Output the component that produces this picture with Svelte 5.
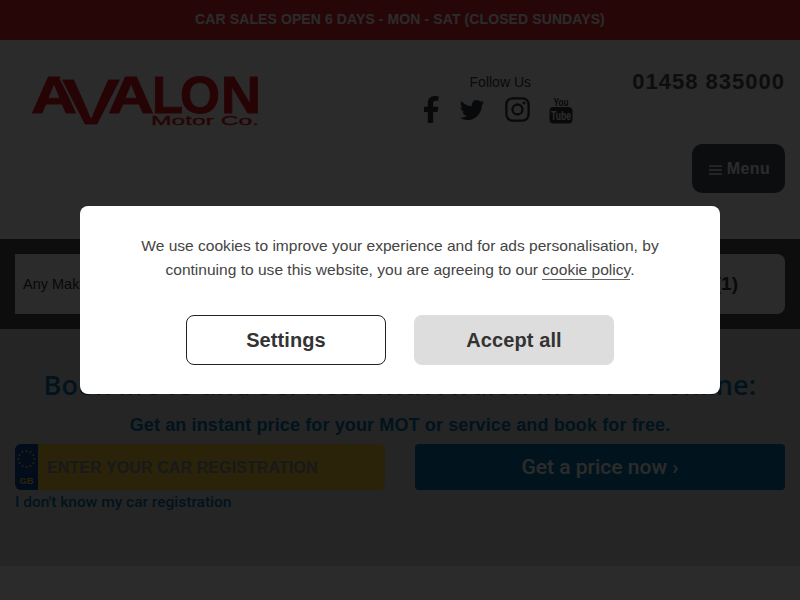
<script>
  // Cookie notice is open on load, page sits dimmed behind it
  let showCookies = true;

  const stars = Array.from({ length: 12 }, (_, i) => {
    const a = (i / 12) * Math.PI * 2;
    return { x: 11.5 + Math.cos(a) * 8, y: 16 + Math.sin(a) * 8 };
  });
</script>

<div class="page">
  <div class="topbar">CAR SALES OPEN 6 DAYS - MON - SAT (CLOSED SUNDAYS)</div>

  <header class="header">
    <a class="logo" href="#home" aria-label="Avalon Motor Co.">
      <svg width="232" height="56" viewBox="0 0 232 56">
        <g class="logo-letters">
          <text x="-1" y="39.5" font-size="51" textLength="46" lengthAdjust="spacingAndGlyphs">A</text>
          <text x="76" y="39.5" font-size="51" textLength="46" lengthAdjust="spacingAndGlyphs">A</text>
          <text class="logo-v" x="28" y="51.5" font-size="67" textLength="62" lengthAdjust="spacingAndGlyphs">V</text>
          <text x="120" y="39.5" font-size="51" textLength="31" lengthAdjust="spacingAndGlyphs">L</text>
          <text x="148" y="39.5" font-size="51" textLength="40" lengthAdjust="spacingAndGlyphs">O</text>
          <text x="189" y="39.5" font-size="51" textLength="40" lengthAdjust="spacingAndGlyphs">N</text>
          <text class="logo-sub" x="119" y="52" font-size="12" textLength="108" lengthAdjust="spacingAndGlyphs">Motor Co.</text>
        </g>
      </svg>
    </a>

    <div class="header-right">
      <div class="contact">
        <div class="social">
          <span class="follow">Follow Us</span>
          <div class="icons">
            <svg class="fb" width="15" height="27" viewBox="520 0 850 1536"><path d="M1343 12v264h-157q-86 0-116 36t-30 108v189h293l-39 296h-254v759h-306v-759h-255v-296h255v-218q0-186 104-288.5t277-102.5q147 0 228 12z"/></svg>
            <svg class="tw" width="28" height="28" viewBox="0 0 1792 1792"><path d="M1684 408q-67 98-162 167 1 14 1 42 0 130-38 259.5t-115.5 248.5-184.5 210.5-258 146-323 54.5q-271 0-496-145 35 4 78 4 225 0 401-138-105-2-188-64.5t-114-159.5q33 5 61 5 43 0 85-11-112-23-185.5-111.5t-73.5-205.5v-4q68 38 146 41-66-44-105-115t-39-154q0-88 44-163 121 149 294.5 238.5t371.5 99.5q-8-38-8-74 0-134 94.5-228.5t228.5-94.5q140 0 236 102 109-21 205-78-37 115-142 182 100-11 192-52z"/></svg>
            <svg class="ig" width="25" height="25" viewBox="0 0 25 25">
              <rect x="1.4" y="1.4" width="22.2" height="22.2" rx="6" fill="none" stroke-width="2.3"/>
              <circle cx="12.5" cy="12.5" r="5" fill="none" stroke-width="2.3"/>
              <circle class="dot" cx="19" cy="6" r="1.5"/>
            </svg>
            <svg class="yt" width="24" height="29" viewBox="0 0 24 29">
              <text class="yt-you" x="12" y="10.5" text-anchor="middle" font-size="11.5" textLength="15" lengthAdjust="spacingAndGlyphs">You</text>
              <rect x="0.5" y="12" width="23" height="16.5" rx="4"/>
              <text class="yt-tube" x="12" y="25" text-anchor="middle" font-size="13" textLength="20" lengthAdjust="spacingAndGlyphs">Tube</text>
            </svg>
          </div>
        </div>
        <a class="phone" href="tel:01458835000">01458 835000</a>
      </div>

      <button class="menu-btn">
        <svg width="13" height="10" viewBox="0 0 13 10"><path d="M0 1h13M0 5h13M0 9h13" stroke-width="1.6"/></svg>
        Menu
      </button>
    </div>
  </header>

  <section class="search">
    <div class="search-box">
      <span class="make">Any Make</span>
      <span class="search-count">Search (1)</span>
    </div>
  </section>

  <section class="booking">
    <h1>Book MOTs and Services with Avalon Motor Co online:</h1>
    <p class="lead">Get an instant price for your MOT or service and book for free.</p>
    <div class="reg-grid">
      <div>
        <div class="plate">
          <div class="gb">
            <svg width="23" height="30" viewBox="0 0 23 30">
              {#each stars as s}
                <circle cx={s.x} cy={s.y - 3} r="1" />
              {/each}
            </svg>
            <span>GB</span>
          </div>
          <span class="reg-input">ENTER YOUR CAR REGISTRATION</span>
        </div>
        <a class="no-reg" href="#reg">I don't know my car registration</a>
      </div>
      <button class="price-btn">Get a price now ›</button>
    </div>
  </section>

  <div class="footer"></div>
</div>

{#if showCookies}
  <div class="overlay">
    <div class="modal">
      <p>We use cookies to improve your experience and for ads personalisation, by continuing to use this website, you are agreeing to our <a href="#cookies">cookie policy</a>.</p>
      <div class="modal-actions">
        <button class="settings">Settings</button>
        <button class="accept" on:click={() => (showCookies = false)}>Accept all</button>
      </div>
    </div>
  </div>
{/if}

<style>
  :global(body) {
    margin: 0;
    font-family: "Liberation Sans", Arial, sans-serif;
    background: #fff;
  }

  .page {
    height: 600px;
    overflow: hidden;
    display: flex;
    flex-direction: column;
  }

  .topbar {
    height: 40px;
    line-height: 38px;
    text-align: center;
    background: #e0262e;
    color: #fff;
    font-size: 14px;
    font-weight: 700;
    letter-spacing: 0.1px;
  }

  .header {
    height: 199px;
    box-sizing: border-box;
    display: flex;
    justify-content: space-between;
    padding: 33px 15px 0 32px;
    background: #fff;
  }

  .logo {
    display: block;
    height: 56px;
  }

  .logo svg {
    overflow: visible;
  }

  .logo-letters text {
    font-family: "Liberation Sans", Arial, sans-serif;
    font-weight: 700;
    fill: #e21c24;
    stroke: #e21c24;
    stroke-width: 1px;
  }

  .logo-letters .logo-v {
    stroke: #fff;
    stroke-width: 1.2px;
  }

  .logo-letters .logo-sub {
    font-weight: 400;
    stroke-width: 0.3px;
  }

  .header-right {
    display: flex;
    flex-direction: column;
    align-items: flex-end;
  }

  .contact {
    display: flex;
    align-items: flex-start;
    height: 60px;
    margin-top: -4px;
  }

  .social {
    display: flex;
    flex-direction: column;
    align-items: center;
    margin: 4px 59px 0 0;
  }

  .follow {
    font-size: 14px;
    line-height: 18px;
    padding-left: 3px;
    color: #3a3d40;
  }

  .icons {
    display: flex;
    align-items: center;
    gap: 19px;
    margin-top: 3px;
    height: 31px;
  }

  .icons svg {
    fill: #34373b;
    stroke: #34373b;
    stroke-width: 0;
    display: block;
  }

  .icons .ig {
    stroke-width: 2.3px;
    fill: none;
  }

  .icons .ig .dot {
    fill: #34373b;
    stroke: none;
  }

  .yt text {
    font-family: "Liberation Sans", Arial, sans-serif;
    font-weight: 700;
  }

  .yt .yt-tube {
    fill: #fff;
  }

  .phone {
    font-size: 22px;
    font-weight: 700;
    letter-spacing: 1px;
    line-height: 26px;
    color: #4a4e54;
    text-decoration: none;
  }

  .menu-btn {
    margin-top: 15px;
    width: 93px;
    height: 49px;
    border: 0;
    border-radius: 10px;
    background: #4a4e54;
    color: #fff;
    font-family: inherit;
    font-size: 16px;
    font-weight: 700;
    letter-spacing: 0.4px;
    display: flex;
    align-items: center;
    justify-content: center;
    gap: 5px;
    padding: 0 0 0 2px;
  }

  .menu-btn svg {
    stroke: #fff;
    margin-top: 3px;
  }

  .search {
    height: 90px;
    box-sizing: border-box;
    padding: 15px;
    background: #4d5055;
  }

  .search-box {
    height: 60px;
    background: #fff;
    border-radius: 0 8px 8px 0;
    display: flex;
    align-items: center;
    justify-content: space-between;
    padding: 0 47px 0 8px;
    font-size: 14.5px;
    color: #333;
  }

  .search-count {
    font-size: 19px;
    font-weight: 700;
    color: #2a3a4a;
  }

  .booking {
    height: 237px;
    box-sizing: border-box;
    padding: 38px 15px 0;
    background: #dadbdd;
  }

  h1 {
    margin: 0;
    text-align: center;
    font-family: "Open Sans", sans-serif;
    font-weight: 600;
    font-size: 27px;
    line-height: 36px;
    color: #0a71ac;
    letter-spacing: 0.22px;
  }

  .lead {
    margin: 11px 0 8px;
    text-align: center;
    font-size: 18px;
    line-height: 22px;
    font-weight: 700;
    letter-spacing: 0.12px;
    color: #0a71ac;
  }

  .reg-grid {
    display: grid;
    grid-template-columns: 1fr 1fr;
    gap: 30px;
    align-items: start;
  }

  .plate {
    height: 46px;
    display: flex;
    align-items: center;
    background: #f6c93a;
    border-radius: 6px;
    overflow: hidden;
  }

  .gb {
    width: 23px;
    height: 46px;
    background: #0c46a0;
    display: flex;
    flex-direction: column;
    align-items: center;
    flex-shrink: 0;
  }

  .gb svg {
    display: block;
    fill: #f6c93a;
    margin-top: 2px;
  }

  .gb span {
    font-size: 9.5px;
    font-weight: 700;
    color: #f6c93a;
    line-height: 10px;
  }

  .reg-input {
    margin-left: 9px;
    padding-top: 2px;
    font-size: 16px;
    font-weight: 700;
    letter-spacing: 0.1px;
    color: #8f9298;
  }

  .no-reg {
    display: block;
    margin-top: 2px;
    font-family: Roboto, sans-serif;
    font-weight: 500;
    font-size: 15.5px;
    line-height: 20px;
    color: #0a71ac;
    text-decoration: none;
  }

  .price-btn {
    height: 46px;
    border: 0;
    border-radius: 4px;
    background: #0a71ac;
    color: #fff;
    font-family: Roboto, sans-serif;
    font-weight: 500;
    font-size: 21px;
    padding: 0;
  }

  .footer {
    flex: 1;
    background: #fff;
  }

  .overlay {
    position: fixed;
    inset: 0;
    background: rgba(0, 0, 0, 0.83);
    display: flex;
    align-items: flex-start;
    justify-content: center;
  }

  .modal {
    margin-top: 206px;
    width: 640px;
    height: 188px;
    box-sizing: border-box;
    padding: 28px 50px 0;
    background: #fff;
    border-radius: 8px;
    text-align: center;
  }

  .modal p {
    margin: 0;
    font-size: 15.55px;
    line-height: 24px;
    color: #444;
  }

  .modal a {
    color: #444;
    text-decoration: none;
    padding-bottom: 1px;
    border-bottom: 1px solid #666;
  }

  .modal-actions {
    display: flex;
    justify-content: center;
    gap: 28px;
    margin-top: 33px;
  }

  .modal-actions button {
    width: 200px;
    height: 50px;
    box-sizing: border-box;
    border-radius: 8px;
    font-family: inherit;
    font-size: 20px;
    font-weight: 700;
    letter-spacing: 0.1px;
    color: #333;
    padding: 0;
  }

  .settings {
    background: #fff;
    border: 1px solid #222;
  }

  .accept {
    background: #ddd;
    border: 0;
  }
</style>
